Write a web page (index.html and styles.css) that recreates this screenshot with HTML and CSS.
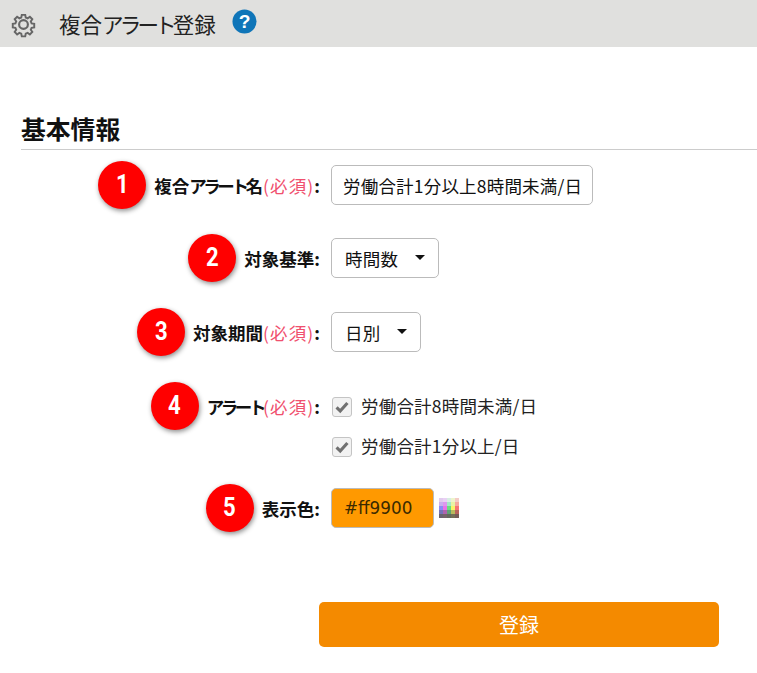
FILE: index.html
```html
<!DOCTYPE html>
<html lang="ja">
<head>
<meta charset="utf-8">
<title>複合アラート登録</title>
<link rel="stylesheet" href="styles.css">
</head>
<body>
<header class="topbar">
  <svg class="gear" viewBox="0 0 24 24" aria-hidden="true"><path d="M10.3 2.5h3.400l.5 2.600 1.900.8 2.200-1.500 2.400 2.400-1.500 2.200.8 1.900 2.600.5v3.400l-2.600.5-.8 1.900 1.500 2.200-2.400 2.400-2.200-1.500-1.900.8-.5 2.600h-3.400l-.5-2.600-1.900-.8-2.200 1.500-2.400-2.400 1.500-2.200-.8-1.900-2.600-.5v-3.400l2.600-.5.8-1.900-1.500-2.200 2.400-2.400 2.200 1.500 1.900-.8z" transform="translate(1.200 1.200) scale(.9)"/><circle cx="12" cy="12" r="3.900"/></svg>
  <h1 class="title">複合<span class="kana-lg">アラート</span>登録</h1>
  <svg class="help" viewBox="0 0 26 26" aria-hidden="true"><circle cx="13" cy="13" r="12.500"/><text x="13" y="20" text-anchor="middle">?</text></svg>
</header>
<main class="content">
  <h2 class="section">基本情報</h2>
  <form class="form">
    <div class="row row-name">
      <div class="label"><span class="badge"><span class="digit">1</span></span><span>複合<span class="kana">アラート</span>名<span class="req">(必須)</span>:</span></div>
      <div class="field"><div class="input name-input">労働合計1分以上8時間未満/日</div></div>
    </div>
    <div class="row row-basis">
      <div class="label"><span class="badge"><span class="digit">2</span></span><span>対象基準:</span></div>
      <div class="field"><div class="input select basis">時間数<i class="caret"></i></div></div>
    </div>
    <div class="row row-period">
      <div class="label"><span class="badge"><span class="digit">3</span></span><span>対象期間<span class="req">(必須)</span>:</span></div>
      <div class="field"><div class="input select period">日別<i class="caret"></i></div></div>
    </div>
    <div class="row row-alert">
      <div class="label"><span class="badge"><span class="digit">4</span></span><span><span class="kana">アラート</span><span class="req">(必須)</span>:</span></div>
      <div class="field checks">
        <div class="check"><span class="box"><svg viewBox="0 0 20 20" aria-hidden="true"><path d="M4 10.500l4 4 8-9"/></svg></span>労働合計8時間未満/日</div>
        <div class="check"><span class="box"><svg viewBox="0 0 20 20" aria-hidden="true"><path d="M4 10.500l4 4 8-9"/></svg></span>労働合計1分以上/日</div>
      </div>
    </div>
    <div class="row row-color">
      <div class="label"><span class="badge"><span class="digit">5</span></span><span>表示色:</span></div>
      <div class="field color-field">
        <div class="input color">#ff9900</div>
        <div class="palette" aria-hidden="true">
          <i style="background:#d8b8e8"></i><i style="background:#e0c0f0"></i><i style="background:#c8e8d8"></i><i style="background:#e8f0b8"></i><i style="background:#f0b8b0"></i>
          <i style="background:#b890e8"></i><i style="background:#d070e8"></i><i style="background:#80e0b0"></i><i style="background:#e0f080"></i><i style="background:#f08878"></i>
          <i style="background:#6060f0"></i><i style="background:#e040e0"></i><i style="background:#30d050"></i><i style="background:#f8f030"></i><i style="background:#f04040"></i>
          <i style="background:#4040a0"></i><i style="background:#902890"></i><i style="background:#208040"></i><i style="background:#a0a020"></i><i style="background:#a02820"></i>
          <i style="background:#302838"></i><i style="background:#402830"></i><i style="background:#283020"></i><i style="background:#403818"></i><i style="background:#402018"></i>
        </div>
      </div>
    </div>
    <div class="actions"><button type="button" class="submit">登録</button></div>
  </form>
</main>
</body>
</html>
```
FILE: styles.css
```css
* { box-sizing: border-box; }
html, body { margin: 0; padding: 0; }
body {
  width: 757px;
  height: 673px;
  overflow: hidden;
  background: #fff;
  color: #111;
  font-family: "Noto Sans CJK JP", "Noto Sans", sans-serif;
}
.topbar {
  height: 47px;
  background: #e0e0de;
  display: flex;
  align-items: center;
  padding: 0 0 0 10px;
}
.gear { width: 27px; height: 27px; fill: none; stroke: #666; stroke-width: 1.9; margin-top: 2px; }
.title { margin: 1px 0 0 22px; font-size: 21.500px; font-weight: 400; line-height: 28px; color: #222; white-space: nowrap; }
.kana-lg { letter-spacing: -3.800px; }
.help { width: 25px; height: 25px; margin: -4px 0 0 16px; }
.help circle { fill: #0f75b8; }
.help text { fill: #fff; font: 700 20px "Liberation Sans", sans-serif; }
.content { padding: 66px 0 0 21px; }
.section {
  margin: 0;
  height: 37px;
  font-size: 24.800px;
  line-height: 30px;
  font-weight: 700;
  color: #111;
  border-bottom: 1px solid #ccc;
}
.form { display: flex; flex-direction: column; }
.row { display: grid; grid-template-columns: 299px 1fr; column-gap: 11px; }
.row-name { margin-top: 15px; height: 40px; }
.row-basis { margin-top: 33px; height: 40px; }
.row-period { margin-top: 34px; height: 40px; }
.row-alert { margin-top: 34px; height: 82px; }
.row-color { margin-top: 20px; height: 40px; }
.label {
  display: flex;
  justify-content: flex-end;
  align-items: center;
  gap: 8px;
  height: 40px;
  font-size: 17.500px;
  font-weight: 700;
  white-space: nowrap;
}
.kana { letter-spacing: -3.400px; }
.badge {
  width: 48px;
  height: 48px;
  flex: none;
  border-radius: 50%;
  background: #f00;
  box-shadow: 1px 2px 5px rgba(0, 0, 0, .45);
  color: #fff;
  font: 700 26px/46px Roboto, sans-serif;
  text-align: center;
}
.digit { display: inline-block; transform: scaleX(.85); }
.req { color: #f0506e; font-weight: 400; letter-spacing: 1.100px; }
.input {
  height: 40px;
  display: inline-flex;
  align-items: center;
  background: #fff;
  border: 1px solid #bbb;
  border-radius: 5px;
  font-size: 17.500px;
  letter-spacing: .2px;
  color: #111;
}
.name-input { width: 262px; padding-left: 11px; white-space: nowrap; }
.select { padding-left: 13px; position: relative; }
.basis { width: 108px; }
.period { width: 90px; }
.caret {
  position: absolute;
  right: 13px;
  top: 16px;
  border: 5px solid transparent;
  border-top: 5px solid #111;
  border-bottom: 0;
}
.checks { display: flex; flex-direction: column; gap: 19px; padding-top: 9px; }
.check { display: flex; align-items: center; height: 21px; font-size: 17.500px; letter-spacing: .2px; color: #222; white-space: nowrap; }
.box {
  width: 20px;
  height: 20px;
  margin: 2px 9px 0 1px;
  border: 1px solid #c4c4c4;
  border-radius: 3px;
  background: #f2f2f2;
}
.box svg { display: block; width: 18px; height: 18px; fill: none; stroke: #707070; stroke-width: 3.500; }
.color-field { display: flex; align-items: center; gap: 5px; }
.color { width: 103px; padding-left: 12px; background: #f90; font-family: "DejaVu Sans", sans-serif; font-size: 16.800px; letter-spacing: 0; color: #3a2a00; }
.palette {
  width: 20px;
  height: 20px;
  display: grid;
  grid-template-columns: repeat(5, 4px);
  grid-auto-rows: 4px;
  opacity: .72;
}
.actions { margin-top: 74px; padding-left: 319px; margin-left: -21px; }
.submit {
  display: block;
  width: 400px;
  height: 45px;
  padding: 0;
  border: 0;
  border-radius: 5px;
  background: #f48a00;
  color: #fff;
  font: 400 20px "Noto Sans CJK JP", sans-serif;
}
```
